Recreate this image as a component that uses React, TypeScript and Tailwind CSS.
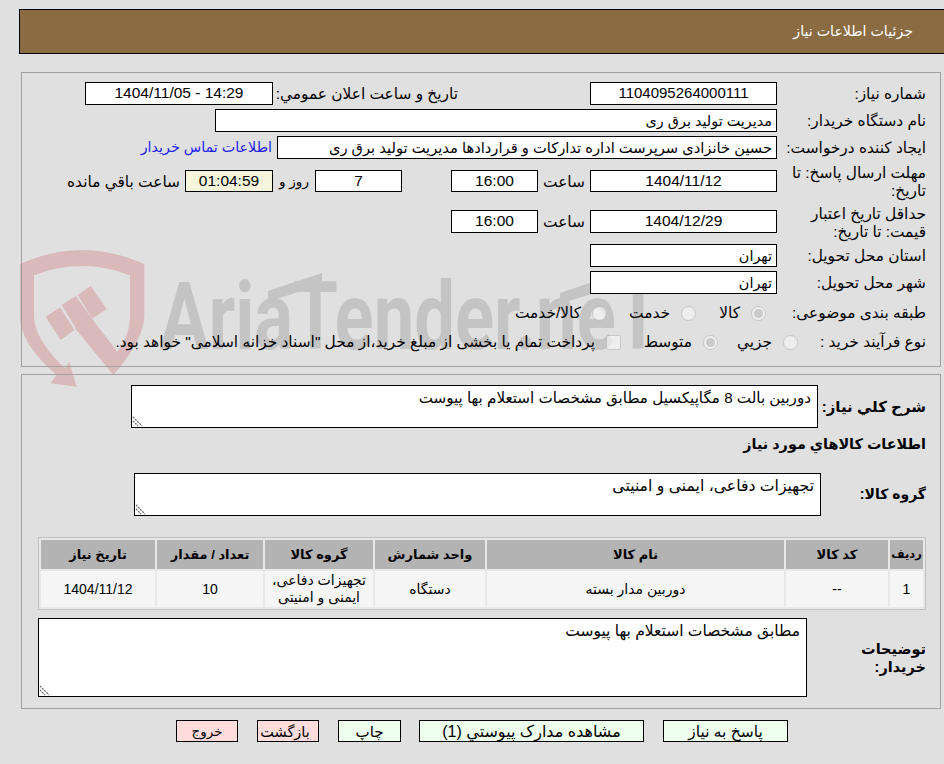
import type { ReactNode } from 'react'

const fontStack = 'font-["Liberation_Sans","DejaVu_Sans",sans-serif]'

function Box({ className = 'bg-white', children }: { className?: string; children?: ReactNode }) {
  return (
    <div className={`shrink-0 border border-black whitespace-nowrap overflow-hidden ${className}`}>
      {children}
    </div>
  )
}

const field = 'h-[23px] bg-white px-[4px] text-[14.4px] leading-[22px]'
const numField = 'h-[23px] bg-white px-[4px] text-center text-[15.5px] leading-[20px]'
const smallNumField = 'h-[22px] bg-white px-[4px] text-center text-[15.5px] leading-[20px]'

function Label({ className = '', children }: { className?: string; children: ReactNode }) {
  return <div className={`shrink-0 leading-[18px] ${className}`}>{children}</div>
}

function Note({ className = '', textClass, text }: { className?: string; textClass: string; text: string }) {
  return (
    <div className={`relative shrink-0 ${className}`}>
      <textarea
        readOnly
        dir="rtl"
        defaultValue={text}
        className={`block h-full w-full resize-none border border-black bg-white px-[6px] py-[2px] leading-[20px] outline-none ${textClass}`}
      />
      {/* resize grip */}
      <svg className="absolute bottom-[1px] left-[1px]" width="11" height="11" viewBox="0 0 11 11" stroke="#666" strokeWidth="1.2" fill="none">
        <path d="M1 1 L10 10" strokeDasharray="2 1" />
        <path d="M1 5 L6 10" strokeDasharray="2 1" />
      </svg>
    </div>
  )
}

function Choice({ className = '', label, checked }: { className?: string; label: string; checked?: boolean }) {
  return (
    <div className={`flex shrink-0 items-center gap-[11px] ${className}`}>
      <input type="radio" disabled checked={!!checked} readOnly className="m-0 h-[15px] w-[15px] shrink-0" />
      <span>{label}</span>
    </div>
  )
}

function Watermark() {
  return (
    <div className="absolute left-0 top-0 h-[400px] w-[700px] overflow-hidden" aria-hidden="true">
      <svg className="absolute left-[10px] top-[240px]" width="160" height="155" viewBox="0 0 480 465" fill="#d9b9ba">
        <path d="M30 72 Q215 -12 403 72 L403 230 Q400 300 310 405 L195 265 L245 235 L322 335 Q360 285 360 230 L360 106 Q215 50 72 106 L72 230 Q75 300 165 385 L178 365 L200 440 L122 430 L140 405 Q30 310 30 230 Z" />
        <path d="M107 230 L150 202 L193 270 L152 300 Z" />
        <path d="M155 195 L197 168 L245 235 L200 268 Z" />
        <path d="M203 165 L242 138 L290 207 L247 236 Z" />
      </svg>
      <div
        className='absolute left-[160px] top-[267px] origin-top-left scale-x-[0.77] whitespace-nowrap font-["Roboto",sans-serif] text-[94px] font-bold leading-[100px] text-[#c4c4c4]'
        dir="ltr"
      >
        AriaTender.neT
      </div>
      {/* slanted caps of the two T's in the logo */}
      <svg className="absolute left-0 top-0" width="700" height="400" fill="#c4c4c4">
        <polygon points="268,291 322,273 322,284 268,302" />
        <polygon points="560,293 619,273 619,285 560,304" />
      </svg>
    </div>
  )
}

export default function App() {
  const tableHead = ['تاریخ نیاز', 'تعداد / مقدار', 'گروه کالا', 'واحد شمارش', 'نام کالا', 'کد کالا']
  return (
    <div className={`relative min-h-screen overflow-hidden bg-[#e0e0e0] pt-[9px] text-[15.4px] text-black ${fontStack}`}>
      <Watermark />
      <div className="relative" dir="rtl">
        {/* Title bar */}
        <div className="ml-[19px] flex h-[45px] items-center border border-r-0 border-black bg-[#8b6b42] pr-[31px] pt-[1px] text-[14.2px] text-white">
          جزئیات اطلاعات نیاز
        </div>

        {/* Main details */}
        <div className="ml-[21px] mr-[3px] mt-[18px] h-[295px] border border-[#a0a0a0] pr-[14px] pt-[9px]">
          <div className="flex h-[23px] items-center">
            <Label className="w-[149px]">شماره نیاز:</Label>
            <Box className="h-[23px] w-[187px] bg-white text-center text-[15px] leading-[20px]">1104095264000111</Box>
            <Label className="mr-[132px] w-[185px]">تاریخ و ساعت اعلان عمومي:</Label>
            <Box className={`w-[188px] ${numField}`}><span dir="ltr">1404/11/05 - 14:29</span></Box>
          </div>
          <div className="mt-[4px] flex h-[23px] items-center">
            <Label className="w-[149px]">نام دستگاه خریدار:</Label>
            <Box className={`w-[562px] ${field}`}>مدیریت تولید برق ری</Box>
          </div>
          <div className="mt-[4px] flex h-[23px] items-center">
            <Label className="w-[149px]">ایجاد کننده درخواست:</Label>
            <Box className="h-[23px] w-[500px] bg-white px-[4px] text-[14.7px] leading-[22px]">حسین خانزادی سرپرست اداره تدارکات و قراردادها مدیریت تولید برق ری</Box>
            <a className="mr-[5px] text-[14.3px] text-[#2222ee]">اطلاعات تماس خریدار</a>
          </div>
          <div className="mt-[4px] flex h-[36px] items-center">
            <Label className="w-[149px] pt-[1px]">مهلت ارسال پاسخ: تا تاریخ:</Label>
            <Box className={`w-[187px] ${smallNumField}`}>1404/11/12</Box>
            <Label className="w-[52px] pt-[1px] text-center">ساعت</Label>
            <Box className={`w-[87px] ${smallNumField}`}>16:00</Box>
            <div className="w-[49px] shrink-0" />
            <Box className={`w-[87px] ${smallNumField}`}>7</Box>
            <Label className="w-[42px] pt-[1px] text-center text-[13.5px]">روز و</Label>
            <Box className="h-[22px] w-[88px] bg-[#f5f5dc] px-[4px] text-center text-[15.5px] leading-[20px]">01:04:59</Box>
            <Label className="mr-[5px] pt-[1px]">ساعت باقي مانده</Label>
          </div>
          <div className="mt-[5px] flex h-[35px] items-center">
            <Label className="w-[149px] pt-[3px]">حداقل تاریخ اعتبار قیمت: تا تاریخ:</Label>
            <Box className={`w-[187px] ${numField}`}>1404/12/29</Box>
            <Label className="w-[52px] pt-[1px] text-center">ساعت</Label>
            <Box className={`w-[87px] ${numField}`}>16:00</Box>
          </div>
          <div className="mt-[5px] flex h-[23px] items-center">
            <Label className="w-[149px]">استان محل تحویل:</Label>
            <Box className={`w-[187px] ${field}`}>تهران</Box>
          </div>
          <div className="mt-[4px] flex h-[23px] items-center">
            <Label className="w-[149px]">شهر محل تحویل:</Label>
            <Box className={`w-[187px] ${field}`}>تهران</Box>
          </div>
          <div className="mt-[9px] flex h-[20px] items-center">
            <Label className="w-[160px]">طبقه بندی موضوعی:</Label>
            <Choice className="w-[70px]" label="کالا" checked />
            <Choice className="w-[89px]" label="خدمت" />
            <Choice label="کالا/خدمت" />
          </div>
          <div className="mt-[9px] flex h-[20px] items-center">
            <Label className="w-[128px]">نوع فرآیند خرید :</Label>
            <Choice className="w-[80px]" label="جزيي" />
            <Choice className="w-[97px]" label="متوسط" checked />
            <div className="flex items-center gap-[11px] whitespace-nowrap">
              <input type="checkbox" disabled readOnly className="m-0 h-[15px] w-[15px] shrink-0" />
              <span>پرداخت تمام یا بخشی از مبلغ خرید،از محل "اسناد خزانه اسلامی" خواهد بود.</span>
            </div>
          </div>
        </div>

        {/* Description and goods */}
        <div className="ml-[21px] mr-[3px] mt-[7px] h-[335px] border border-[#a0a0a0] pr-[14px] pt-[10px]">
          <div className="flex h-[43px] items-center">
            <div className="w-[108px] shrink-0 pt-[1px] text-[15px] font-bold">شرح کلي نیاز:</div>
            <Note className="h-[43px] w-[687px]" textClass="text-[15.15px]" text="دوربین بالت 8 مگاپیکسیل مطابق مشخصات استعلام بها پیوست" />
          </div>
          <div className="mt-[6px] h-[20px] text-[14.4px] font-bold leading-[20px]">اطلاعات کالاهاي مورد نیاز</div>
          <div className="mt-[19px] flex h-[43px] items-center">
            <div className="w-[105px] shrink-0 text-[14px] font-bold">گروه کالا:</div>
            <Note className="h-[43px] w-[687px]" textClass="text-[15.7px]" text="تجهیزات دفاعی، ایمنی و امنیتی" />
          </div>
          <table className="mt-[21px] w-[888px] table-fixed border-separate border-spacing-[2px] border border-[#c0c0c0] bg-[#e8e8e8] text-center text-[14px]" dir="ltr">
            <colgroup>
              <col className="w-[114px]" />
              <col className="w-[106px]" />
              <col className="w-[108px]" />
              <col className="w-[110px]" />
              <col className="w-[297px]" />
              <col className="w-[102px]" />
              <col className="w-[33px]" />
            </colgroup>
            <thead>
              <tr className="h-[29px] bg-[#b3b3b3] text-[13px] font-bold">
                {tableHead.map((h) => (
                  <th key={h} className="p-0 font-bold" dir="rtl">{h}</th>
                ))}
                <th className="p-0 text-[11.5px] font-bold" dir="rtl">ردیف</th>
              </tr>
            </thead>
            <tbody>
              <tr className="h-[36px] bg-[#f5f5f5]">
                <td className="p-0">1404/11/12</td>
                <td className="p-0">10</td>
                <td className="p-0 leading-[17px]" dir="rtl">تجهیزات دفاعی، ایمنی و امنیتی</td>
                <td className="p-0" dir="rtl">دستگاه</td>
                <td className="p-0" dir="rtl">دوربین مدار بسته</td>
                <td className="p-0">--</td>
                <td className="p-0">1</td>
              </tr>
            </tbody>
          </table>
          <div className="mt-[8px] flex h-[79px] items-center">
            <div className="w-[119px] shrink-0 text-[14.5px] font-bold leading-[18px]">توضیحات خریدار:</div>
            <Note className="h-[79px] w-[769px]" textClass="text-[15.5px]" text="مطابق مشخصات استعلام بها پیوست" />
          </div>
        </div>

        {/* Actions */}
        <div className="mt-[11px] flex gap-[19px] pr-[156px]">
          <button className="h-[22px] w-[125px] border border-black bg-[#eeffee] pt-[1px] text-[15.5px] leading-[20px]">پاسخ به نیاز</button>
          <button className="h-[22px] w-[225px] border border-black bg-[#eeffee] pt-[1px] text-[16px] leading-[20px]">مشاهده مدارک پیوستي (1)</button>
          <button className="mr-[-1px] h-[22px] w-[63px] border border-black bg-[#eeffee] pt-[1px] text-[15px] leading-[20px]">چاپ</button>
          <button className="h-[22px] w-[62px] border border-black bg-[#ffdddd] pr-[6px] pt-[1px] text-[14.5px] leading-[20px]">بازگشت</button>
          <button className="h-[22px] w-[62px] border border-black bg-[#ffdddd] pt-[1px] text-[13.5px] leading-[20px]">خروج</button>
        </div>
      </div>
    </div>
  )
}
